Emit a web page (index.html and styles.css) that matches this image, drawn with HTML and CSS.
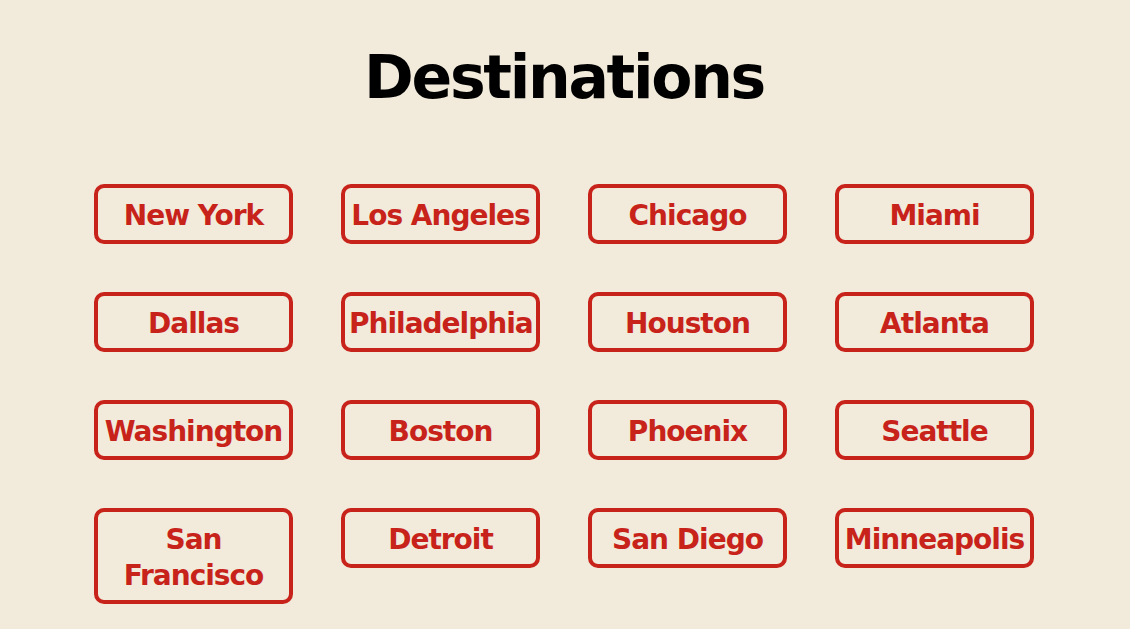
FILE: index.html
```html
<!DOCTYPE html>
<html lang="en">
<head>
<meta charset="utf-8">
<title>Destinations</title>
<link rel="stylesheet" href="styles.css">
</head>
<body>
<main class="page">
  <h1 class="title">Destinations</h1>
  <div class="grid">
    <div class="dest">New York</div>
    <div class="dest">Los Angeles</div>
    <div class="dest">Chicago</div>
    <div class="dest">Miami</div>
    <div class="dest">Dallas</div>
    <div class="dest">Philadelphia</div>
    <div class="dest">Houston</div>
    <div class="dest">Atlanta</div>
    <div class="dest">Washington</div>
    <div class="dest">Boston</div>
    <div class="dest">Phoenix</div>
    <div class="dest">Seattle</div>
    <div class="dest">San Francisco</div>
    <div class="dest">Detroit</div>
    <div class="dest">San Diego</div>
    <div class="dest">Minneapolis</div>
  </div>
</main>
</body>
</html>
```
FILE: styles.css
```css
html, body {
  margin: 0;
  padding: 0;
}
body {
  background: #f2ebdb;
  font-family: "DejaVu Sans", "Liberation Sans", sans-serif;
  overflow: hidden;
}
.page {
  display: flex;
  flex-direction: column;
  align-items: center;
  padding-right: 2px;
}
.title {
  margin: 37px 0 0;
  font-size: 60px;
  line-height: 80px;
  font-weight: 700;
  color: #000;
  letter-spacing: -2.3px;
}
.grid {
  margin-top: 67px;
  display: grid;
  grid-template-columns: repeat(4, 199px);
  column-gap: 48px;
  row-gap: 48px;
  align-items: start;
}
.dest {
  box-sizing: border-box;
  min-height: 60px;
  padding: 10px 4px 6px;
  border: 4px solid #c8231a;
  border-radius: 10px;
  color: #c8231a;
  font-size: 28px;
  line-height: 36px;
  font-weight: 700;
  text-align: center;
  letter-spacing: -1px;
}
```
